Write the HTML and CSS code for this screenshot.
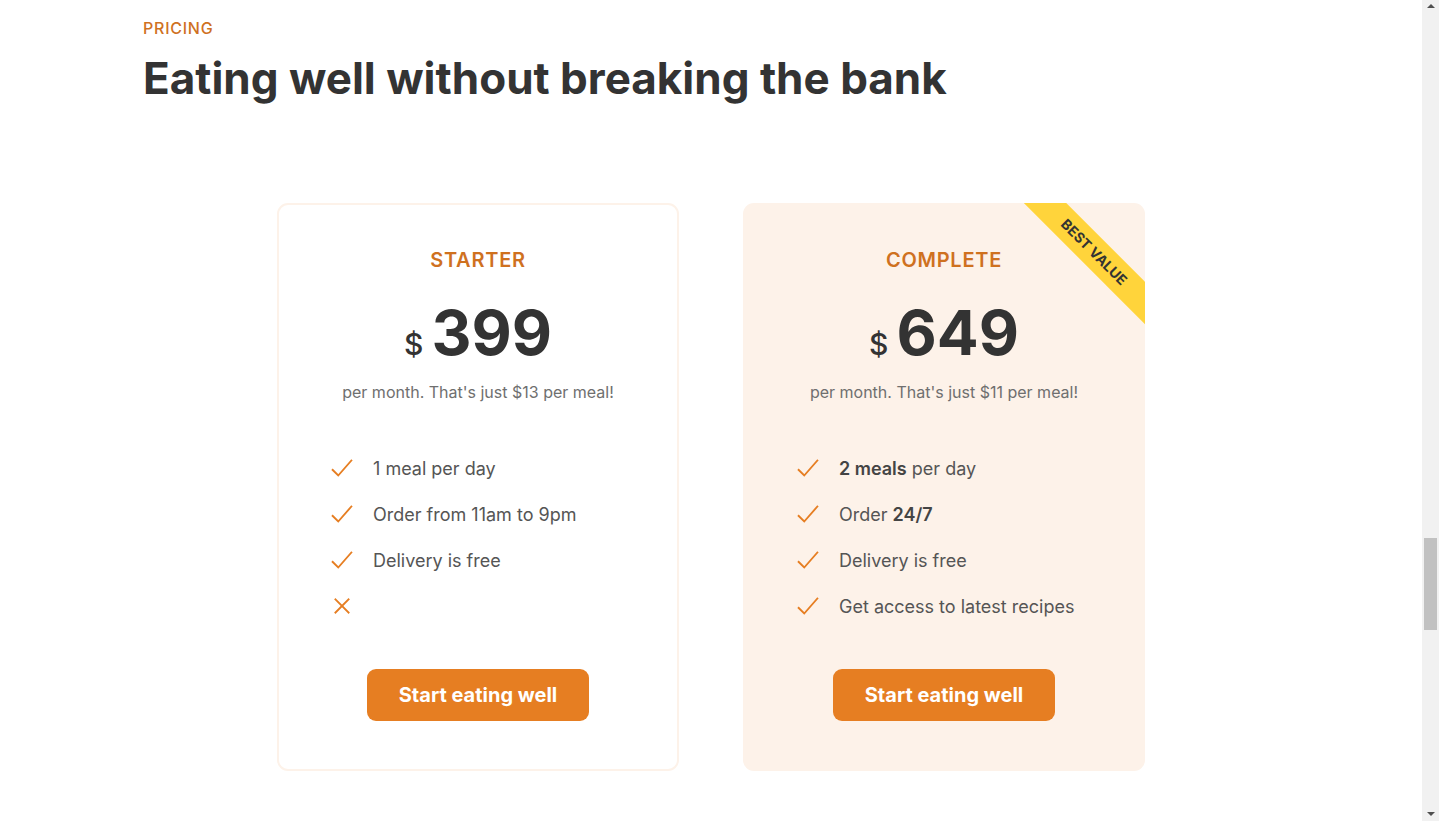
FILE: index.html
```html
<!DOCTYPE html>
<html lang="en">
<head>
<meta charset="utf-8">
<title>Pricing</title>
<link rel="stylesheet" href="styles.css">
</head>
<body>
<main class="page">
<section class="section-pricing">
  <div class="container">
    <span class="subheading">Pricing</span>
    <h2 class="heading-secondary">Eating well without breaking the bank</h2>
  </div>

  <div class="container grid">
    <div class="pricing-plan pricing-plan--starter">
      <header class="plan-header">
        <p class="plan-name">Starter</p>
        <p class="plan-price"><span>$</span>399</p>
        <p class="plan-text">per month. That's just $13 per meal!</p>
      </header>
      <ul class="list">
        <li class="list-item">
          <svg class="list-icon" viewBox="0 0 512 512"><path d="M416 128L192 384l-96-96"/></svg>
          <span>1 meal per day</span>
        </li>
        <li class="list-item">
          <svg class="list-icon" viewBox="0 0 512 512"><path d="M416 128L192 384l-96-96"/></svg>
          <span>Order from 11am to 9pm</span>
        </li>
        <li class="list-item">
          <svg class="list-icon" viewBox="0 0 512 512"><path d="M416 128L192 384l-96-96"/></svg>
          <span>Delivery is free</span>
        </li>
        <li class="list-item">
          <svg class="list-icon" viewBox="0 0 512 512"><path d="M368 368L144 144M368 144L144 368"/></svg>
        </li>
      </ul>
      <div class="plan-sign-up">
        <a href="#" class="btn">Start eating well</a>
      </div>
    </div>

    <div class="pricing-plan pricing-plan--complete">
      <span class="ribbon">Best value</span>
      <header class="plan-header">
        <p class="plan-name">Complete</p>
        <p class="plan-price"><span>$</span>649</p>
        <p class="plan-text">per month. That's just $11 per meal!</p>
      </header>
      <ul class="list">
        <li class="list-item">
          <svg class="list-icon" viewBox="0 0 512 512"><path d="M416 128L192 384l-96-96"/></svg>
          <span><strong>2 meals</strong> per day</span>
        </li>
        <li class="list-item">
          <svg class="list-icon" viewBox="0 0 512 512"><path d="M416 128L192 384l-96-96"/></svg>
          <span>Order <strong>24/7</strong></span>
        </li>
        <li class="list-item">
          <svg class="list-icon" viewBox="0 0 512 512"><path d="M416 128L192 384l-96-96"/></svg>
          <span>Delivery is free</span>
        </li>
        <li class="list-item">
          <svg class="list-icon" viewBox="0 0 512 512"><path d="M416 128L192 384l-96-96"/></svg>
          <span>Get access to latest recipes</span>
        </li>
      </ul>
      <div class="plan-sign-up">
        <a href="#" class="btn">Start eating well</a>
      </div>
    </div>
  </div>
</section>
</main>
<div class="scrollbar" aria-hidden="true">
  <span class="sb-arrow sb-arrow--up"></span>
  <span class="sb-thumb"></span>
  <span class="sb-arrow sb-arrow--down"></span>
</div>
</body>
</html>
```
FILE: styles.css
```css
* {
  margin: 0;
  padding: 0;
  box-sizing: border-box;
}

html,
body {
  height: 100%;
  overflow: hidden;
}

body {
  font-family: Inter, "Open Sans", sans-serif;
  line-height: 1;
  font-weight: 400;
  color: #555;
  background: #fff;
  display: flex;
}

.page {
  flex: 1;
  min-width: 0;
}

/* fake browser scrollbar */
.scrollbar {
  width: 17px;
  height: 100%;
  background: #f1f1f1;
  display: flex;
  flex-direction: column;
  align-items: center;
}

.sb-arrow {
  width: 0;
  height: 0;
  border-left: 4px solid transparent;
  border-right: 4px solid transparent;
}

.sb-arrow--up {
  margin-top: 4px;
  border-bottom: 4px solid #505050;
}

.sb-arrow--down {
  margin-top: auto;
  margin-bottom: 5px;
  border-top: 4px solid #505050;
}

.sb-thumb {
  width: 13px;
  height: 92px;
  margin-top: 530px;
  background: #c1c1c1;
}

.section-pricing {
  padding: 20px 0 0;
}

.container {
  max-width: 1200px;
  padding: 0 32px;
  margin: 0 auto;
}

.subheading {
  display: block;
  font-size: 16px;
  font-weight: 500;
  color: #cf711f;
  text-transform: uppercase;
  letter-spacing: 0.75px;
  margin-bottom: 16px;
}

.heading-secondary {
  font-size: 44px;
  font-weight: 700;
  color: #333;
  letter-spacing: 0;
  line-height: 1.2;
  margin-bottom: 98px;
}

.grid {
  display: grid;
  grid-template-columns: 1fr 1fr;
  column-gap: 64px;
}

.pricing-plan {
  border-radius: 11px;
  width: 75%;
  padding: 45px 48px 48px;
}

.pricing-plan--starter {
  justify-self: end;
  border: 2px solid #fdf2e9;
}

.pricing-plan--complete {
  background: #fdf2e9;
  position: relative;
  overflow: hidden;
  padding: 47px 50px 50px;
}

.ribbon {
  position: absolute;
  top: 6%;
  right: -18%;
  text-transform: uppercase;
  font-size: 14px;
  font-weight: 700;
  color: #333;
  background: #ffd43b;
  padding: 8px 80px;
  transform: rotate(45deg);
}

.plan-header {
  text-align: center;
  margin-bottom: 48px;
}

.plan-name {
  color: #cf711f;
  font-weight: 600;
  font-size: 20px;
  text-transform: uppercase;
  letter-spacing: 0.75px;
  margin-bottom: 32px;
}

.plan-price {
  font-size: 62px;
  font-weight: 700;
  color: #333;
  margin-bottom: 16px;
}

.plan-price span {
  font-size: 30px;
  font-weight: 500;
  margin-right: 8px;
}

.plan-text {
  font-size: 16px;
  line-height: 1.6;
  color: #6f6f6f;
}

.list {
  list-style: none;
  display: flex;
  flex-direction: column;
  gap: 16px;
}

.list-item {
  font-size: 18px;
  display: flex;
  align-items: center;
  gap: 16px;
  line-height: 1.2;
}

.list-item strong {
  font-weight: 600;
  color: #444;
}

.list-icon {
  width: 30px;
  height: 30px;
  fill: none;
  stroke: #e67e22;
  stroke-width: 32;
  stroke-linecap: square;
  stroke-linejoin: miter;
}

.plan-sign-up {
  text-align: center;
  margin-top: 48px;
}

.btn {
  display: inline-block;
  text-decoration: none;
  font-size: 20px;
  font-weight: 700;
  padding: 16px 32px;
  border-radius: 9px;
  background: #e67e22;
  color: #fff;
}
```
